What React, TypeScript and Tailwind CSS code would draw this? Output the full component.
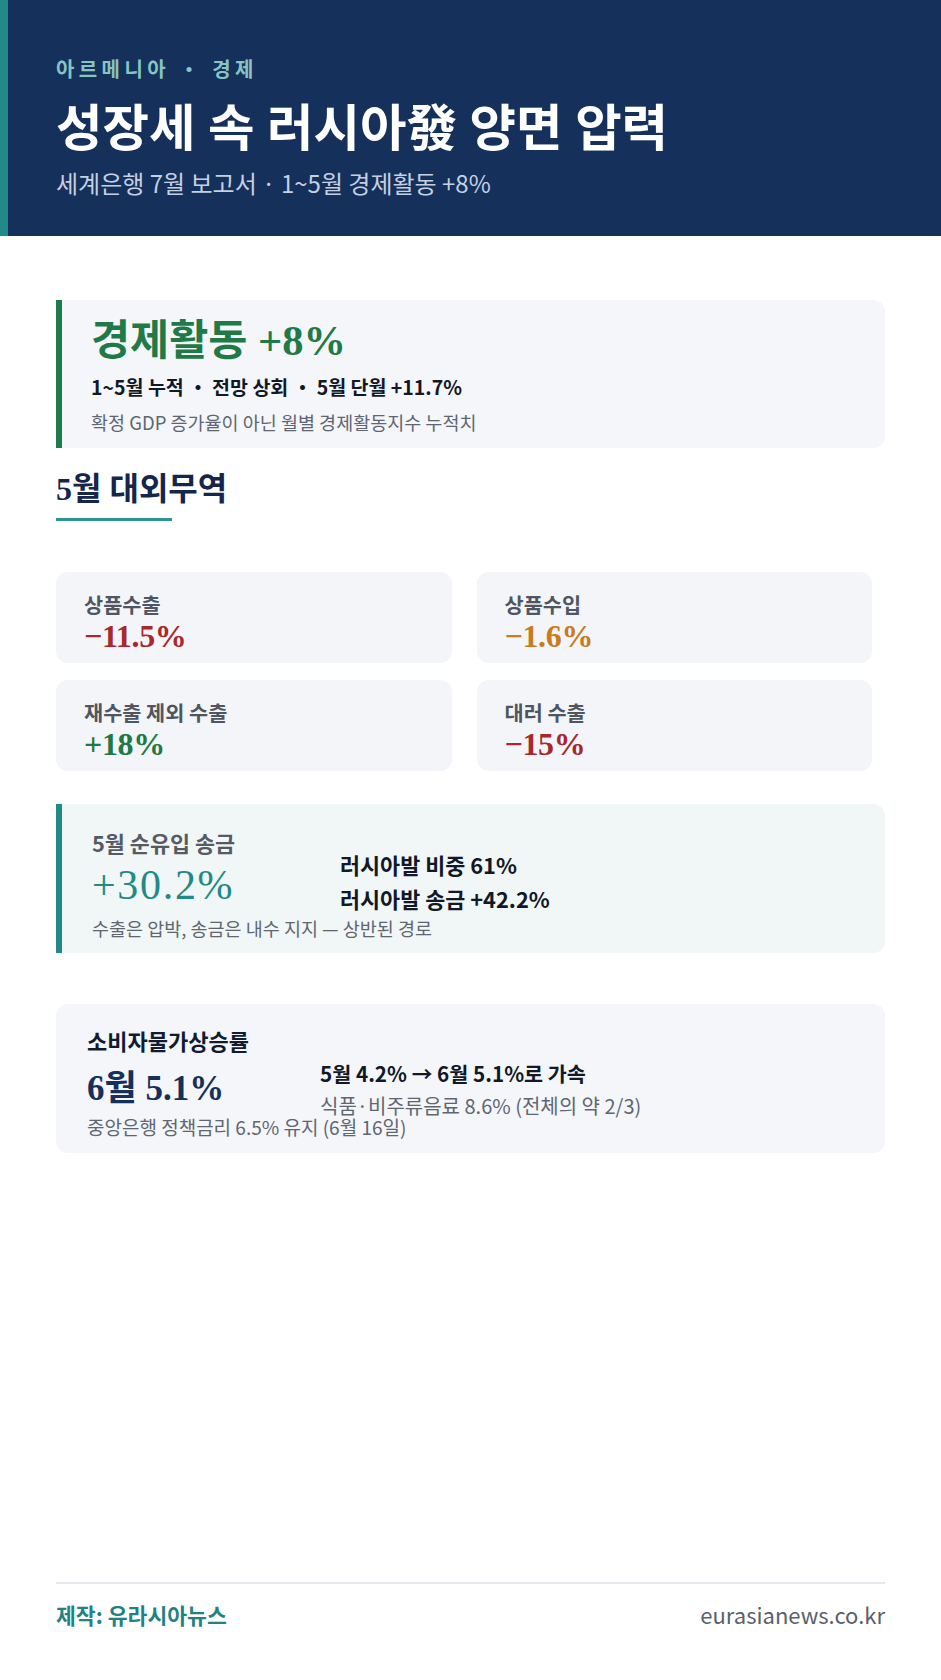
import React from "react";

const sans = "font-['Noto_Sans_CJK_KR','Noto_Sans',sans-serif]";
const serif = "font-['Liberation_Serif','Noto_Sans_CJK_KR',serif]";

function Tile({ label, value, color }: { label: string; value: string; color: string }) {
  return (
    <div className="h-[91px] rounded-[12px] bg-[#f4f5f9] pl-[28px] pt-[19px]">
      <div className="text-[20.8px] leading-[26px] font-bold text-[#4f5663] whitespace-nowrap">{label}</div>
      <div className={`${serif} text-[32px] leading-[38px] font-bold tracking-[-0.01em] ${color}`}>{value}</div>
    </div>
  );
}

export default function App() {
  return (
    <div className={`${sans} min-h-[1680px] w-full flex flex-col bg-white`}>
      <header className="h-[236px] shrink-0 bg-[#15305a] border-l-[8px] border-[#1f8a87] pl-[48px] pt-[54px]">
        <div className="text-[20px] leading-[30px] font-bold tracking-[0.22em] text-[#86c5c0] whitespace-nowrap">아르메니아 ・ 경제</div>
        <h1 className={`${serif} mt-[15px] text-[50.5px] leading-[60px] font-bold text-white whitespace-nowrap`}>성장세 속 러시아發 양면 압력</h1>
        <div className="mt-[8px] text-[24px] leading-[32px] text-[#c5d0e2] whitespace-nowrap">세계은행 7월 보고서 · 1~5월 경제활동 +8%</div>
      </header>

      <main className="px-[56px] pt-[64px]">
        <div className="h-[148px] rounded-r-[12px] bg-[#f4f6fa] border-l-[6px] border-[#1e7b4c] pl-[29px] pt-[15px]">
          <div className={`${serif} text-[42.5px] leading-[52px] font-bold text-[#1f7a48] whitespace-nowrap`}>경제활동 +8%</div>
          <div className="mt-[5px] text-[19.5px] leading-[30px] font-semibold text-[#111827] whitespace-nowrap">1~5월 누적 ・ 전망 상회 ・ 5월 단월 +11.7%</div>
          <div className="mt-[7px] text-[18.5px] leading-[26px] text-[#5f6673] whitespace-nowrap">확정 GDP 증가율이 아닌 월별 경제활동지수 누적치</div>
        </div>

        <div className="mt-[20px]">
          <h2 className={`${serif} text-[32px] leading-[42px] font-bold text-[#15264a]`}>5월 대외무역</h2>
          <div className="mt-[8px] h-[3px] w-[116px] bg-[#2a9591]" />
        </div>

        <div className="mt-[51px] w-[816px] grid grid-cols-2 gap-x-[25px] gap-y-[17px]">
          <Tile label="상품수출" value="−11.5%" color="text-[#a7282d]" />
          <Tile label="상품수입" value="−1.6%" color="text-[#c77c1e]" />
          <Tile label="재수출 제외 수출" value="+18%" color="text-[#1d7a45]" />
          <Tile label="대러 수출" value="−15%" color="text-[#a7282d]" />
        </div>

        <div className="mt-[33px] h-[149px] rounded-r-[12px] bg-[#f1f6f6] border-l-[6px] border-[#1f8a87] pl-[30px] pt-[25px] flex items-start">
          <div className="w-[248px] shrink-0">
            <div className="text-[21.8px] leading-[28px] font-bold text-[#555b66] whitespace-nowrap">5월 순유입 송금</div>
            <div className={`${serif} text-[42px] leading-[57px] tracking-[0.04em] text-[#1f8a87]`}>+30.2%</div>
            <div className="mt-[1px] text-[18.5px] leading-[26px] text-[#5f6673] whitespace-nowrap">수출은 압박, 송금은 내수 지지 — 상반된 경로</div>
          </div>
          <div className="mt-[19px] text-[21.8px] leading-[34px] font-semibold text-[#111827] whitespace-nowrap">
            <div>러시아발 비중 61%</div>
            <div>러시아발 송금 +42.2%</div>
          </div>
        </div>

        <div className="mt-[51px] h-[149px] rounded-[12px] bg-[#f4f6fa] pl-[31px] pt-[22px] flex items-start">
          <div className="w-[233px] shrink-0">
            <div className="text-[22px] leading-[28px] font-bold text-[#111c33] whitespace-nowrap">소비자물가상승률</div>
            <div className={`${serif} mt-[13px] text-[35px] leading-[44px] font-bold text-[#15305a] whitespace-nowrap`}>6월 5.1%</div>
            <div className="mt-[3px] text-[19px] leading-[26px] text-[#5f6673] whitespace-nowrap">중앙은행 정책금리 6.5% 유지 (6월 16일)</div>
          </div>
          <div className="mt-[32px] whitespace-nowrap">
            <div className="text-[20.7px] leading-[31px] font-semibold text-[#111827]">5월 4.2% → 6월 5.1%로 가속</div>
            <div className="mt-[3px] text-[20px] leading-[28px] text-[#5f6673]">식품·비주류음료 8.6% (전체의 약 2/3)</div>
          </div>
        </div>
      </main>

      <footer className="mt-auto mx-[56px] border-t-2 border-[#e5e8ec] pt-[15px] pb-[50px] flex justify-between items-baseline">
        <div className="text-[21.6px] leading-[30px] font-bold text-[#1f8382]">제작: 유라시아뉴스</div>
        <div className="text-[22px] leading-[30px] text-[#5a606b]">eurasianews.co.kr</div>
      </footer>
    </div>
  );
}
